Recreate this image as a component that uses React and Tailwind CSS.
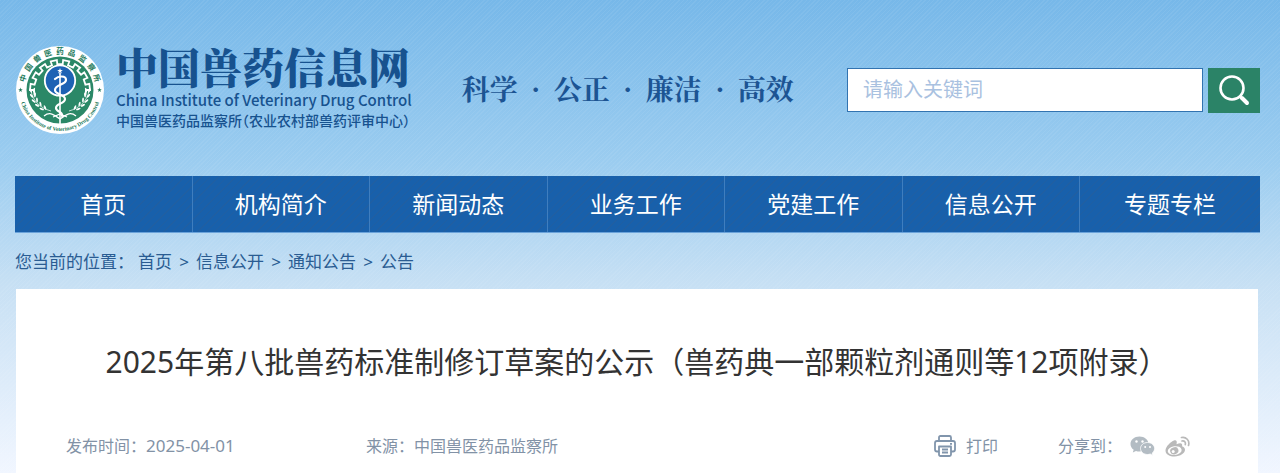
import { useState } from "react";

const navItems = ["首页", "机构简介", "新闻动态", "业务工作", "党建工作", "信息公开", "专题专栏"];
const crumbs = ["首页", "信息公开", "通知公告", "公告"];
const slogan = ["科学", "公正", "廉洁", "高效"];

const point = (r, deg) => {
  const a = (deg * Math.PI) / 180;
  return `${(45 + r * Math.cos(a)).toFixed(2)} ${(45 + r * Math.sin(a)).toFixed(2)}`;
};

// open gear rim, from lower left over the top to lower right
const gearPath = () => {
  const pts = [];
  const step = 204 / 17;
  for (let i = 0; i < 17; i++) {
    const r = i % 2 === 0 ? 26 : 30;
    pts.push(point(r, 168 + i * step), point(r, 168 + (i + 1) * step));
  }
  return "M" + pts.join(" L");
};

const leaves = [
  [17, 46, 60],
  [18, 51, 50],
  [20, 56, 40],
  [23.5, 60, 30],
  [28, 63.5, 20],
];

function Star({ x, y, r }) {
  const pts = Array.from({ length: 10 }, (_, i) => {
    const a = (-90 + i * 36) * (Math.PI / 180);
    const d = i % 2 ? r * 0.4 : r;
    return `${(x + d * Math.cos(a)).toFixed(2)},${(y + d * Math.sin(a)).toFixed(2)}`;
  });
  return <polygon points={pts.join(" ")} />;
}

function Branch() {
  return (
    <g>
      <path d="M16 46C18 56 25 63 36 66" fill="none" stroke="#fff" strokeWidth="0.7" />
      {leaves.map(([x, y, rot]) => (
        <g key={y} fill="#fff">
          <ellipse cx={x - 1} cy={y + 1} rx="2.4" ry="0.9" transform={`rotate(${rot} ${x} ${y})`} />
          <ellipse cx={x + 2} cy={y - 1} rx="2.4" ry="0.9" transform={`rotate(${rot + 45} ${x + 2} ${y - 1})`} />
        </g>
      ))}
    </g>
  );
}

function Emblem() {
  return (
    <svg viewBox="0 0 90 90" className="size-[90px] shrink-0" role="img" aria-label="中国兽医药品监察所">
      <defs>
        <path id="ring-top" d="M9 45A36 36 0 0 1 81 45" />
        <path id="ring-bottom" d="M4 45A41 41 0 0 0 86 45" />
      </defs>
      <circle cx="45" cy="45" r="44" fill="#fff" />
      <circle cx="45" cy="45" r="33.5" fill="#2b8867" />
      <g fill="#22795a" className="font-['Noto_Sans_CJK_SC',sans-serif] font-bold">
        {"中国兽医药品监察所".split("").map((c, i) => (
          <text key={i} fontSize="7.5" textAnchor="middle">
            <textPath href="#ring-top" startOffset={`${10 + i * 10}%`}>{c}</textPath>
          </text>
        ))}
      </g>
      <text fontSize="5.6" textAnchor="middle" fill="#22795a" className="font-['Liberation_Serif',serif] font-bold">
        <textPath href="#ring-bottom" startOffset="50%">China Institute of Veterinary Drug Control</textPath>
      </text>
      <g fill="#22795a">
        <Star x={5.5} y={45} r={2.4} />
        <Star x={84.5} y={45} r={2.4} />
      </g>
      <path d={gearPath()} fill="none" stroke="#fff" strokeWidth="1.8" />
      <circle cx="45" cy="35.5" r="15.2" fill="#1d62b4" stroke="#fff" strokeWidth="1.8" />
      <Branch />
      <g transform="translate(90 0) scale(-1 1)">
        <Branch />
      </g>
      <g fill="#fff">
        <Star x={45} y={26} r={3} />
      </g>
      <path d="M45 28V79" stroke="#fff" strokeWidth="1.6" />
      <path
        d="M40 34C43 31 51 30 51 35C51 40 40 39 40 45C40 50 50 49 50 54C50 59 41 58 41 63C41 67 48 66 47 71"
        fill="none"
        stroke="#fff"
        strokeWidth="2.2"
        strokeLinecap="round"
      />
      <path d="M29 71C35 66 39 70 45 74C51 70 55 66 61 71M38 72L45 69L52 72" fill="none" stroke="#fff" strokeWidth="1.3" />
    </svg>
  );
}

function SearchIcon() {
  return (
    <svg viewBox="0 0 32 32" className="size-8" fill="none" stroke="#fff" strokeWidth="2.6" strokeLinecap="round">
      <circle cx="14" cy="14" r="11.5" />
      <path d="M22 22.5L23.5 24" />
      <path d="M24 24L29 29" strokeWidth="4" />
    </svg>
  );
}

function PrinterIcon() {
  return (
    <svg viewBox="0 0 22 22" className="size-[22px]" fill="none" stroke="#8195ac" strokeWidth="1.8" strokeLinejoin="round">
      <path d="M5 6V2.5Q5 1 6.500 1H15.500Q17 1 17 2.500V6" />
      <path d="M5 16.500H3Q1 16.500 1 14.500V8Q1 6 3 6H19Q21 6 21 8V14.500Q21 16.500 19 16.500H17" />
      <path d="M5 11.500H17V19.500Q17 21 15.500 21H6.500Q5 21 5 19.500Z" />
      <path d="M8 14.500H14M8 17.500H14M16 8.800H18" />
    </svg>
  );
}

function WechatIcon() {
  return (
    <svg viewBox="0 0 25 20" className="h-5 w-[25px]">
      <path d="M9.500 0.500C4.300 0.500 0.500 3.800 0.500 8C0.500 10.400 1.800 12.400 3.700 13.800L2.800 16.500L6 14.900C7.100 15.200 8.200 15.500 9.500 15.500C14.500 15.500 18.500 12.200 18.500 8C18.500 3.800 14.500 0.500 9.500 0.500Z" fill="#b3bcc3" />
      <path d="M17.500 6.500C13.500 6.500 10.500 9.200 10.500 12.500C10.500 15.800 13.500 18.500 17.500 18.500C18.500 18.500 19.400 18.300 20.300 18L22.800 19.500L22.200 17.100C23.700 16 24.600 14.400 24.600 12.500C24.600 9.200 21.500 6.500 17.500 6.500Z" fill="#b3bcc3" stroke="#fff" strokeWidth="0.8" />
      <g fill="#fff">
        <circle cx="6.500" cy="5.500" r="1.200" />
        <circle cx="12.500" cy="5.500" r="1.200" />
        <circle cx="15.200" cy="11" r="1" />
        <circle cx="20" cy="11" r="1" />
      </g>
    </svg>
  );
}

function WeiboIcon() {
  return (
    <svg viewBox="0 0 25 21" className="h-[21px] w-[25px]">
      <path d="M9 4.500C6 5.500 0.500 10.500 0.500 14.500C0.500 18.500 5 20.500 9.500 20.500C15.500 20.500 20 17 20 13.800C20 11.800 18.500 10.700 17 10.300C17.800 8 16.500 6 11.500 8.200C12.300 5.500 11.500 3.800 9 4.500Z" fill="#b9b9b9" />
      <ellipse cx="9.700" cy="14.600" rx="7" ry="4.400" fill="#fff" transform="rotate(-8 9.700 14.600)" />
      <ellipse cx="9.300" cy="14.800" rx="4.200" ry="3.500" fill="#b9b9b9" transform="rotate(-18 9.300 14.800)" />
      <circle cx="8.200" cy="15.600" r="1.500" fill="#fff" />
      <g fill="none" stroke="#b9b9b9" strokeWidth="1.700" strokeLinecap="round">
        <path d="M16.500 1.500C21 0.500 25 4.500 23.500 9.500" />
        <path d="M17 5C19.500 4.500 21 6.300 20.300 8.600" />
      </g>
    </svg>
  );
}

export default function App() {
  const [keyword, setKeyword] = useState("");

  return (
    <div className="min-h-screen bg-[repeating-linear-gradient(135deg,#ffffff0f_0px,#ffffff0f_1px,transparent_1px,transparent_3px),linear-gradient(to_bottom,#77b8e9_0px,#9ccdf0_165px,#c7e0f4_285px,#f1f6ff_473px)] px-[15px] pr-5 font-['Noto_Sans','Noto_Sans_CJK_SC',sans-serif]">
      <header className="flex h-44 items-center pt-1">
        <a href="#" className="flex items-center gap-[11px] text-[#17528f]">
          <Emblem />
          <div className="pb-1 whitespace-nowrap font-['Noto_Sans_CJK_SC',sans-serif]">
            <h1 className="mb-1 font-['Noto_Serif_CJK_SC','Noto_Sans_CJK_SC',serif] text-[42px] leading-10 font-black">中国兽药信息网</h1>
            <p className="text-[15px] leading-5 font-medium">China Institute of Veterinary Drug Control</p>
            <p className="text-sm leading-5 font-medium [font-feature-settings:'halt']">中国兽医药品监察所（农业农村部兽药评审中心）</p>
          </div>
        </a>

        <p className="ml-[50px] flex pb-1 font-['Noto_Serif_CJK_SC','Noto_Sans_CJK_SC',serif] text-[28px] leading-10 font-bold whitespace-nowrap text-[#1c5493]">
          {slogan.map((word, i) => (
            <span key={word} className="flex">
              {i > 0 && <span className="w-9 text-center">·</span>}
              {word}
            </span>
          ))}
        </p>

        <form className="ml-auto flex gap-[5px]" onSubmit={(e) => e.preventDefault()}>
          <input
            type="text"
            aria-label="请输入关键词"
            placeholder="请输入关键词"
            value={keyword}
            onChange={(e) => setKeyword(e.target.value)}
            className="h-11 w-[356px] border border-[#3273b0] bg-white px-[15px] text-xl text-[#17528f] outline-none placeholder:text-[#a9c1e0]"
          />
          <button type="submit" aria-label="搜索" className="flex h-[45px] w-[52px] items-center justify-center bg-[#2b8367]">
            <SearchIcon />
          </button>
        </form>
      </header>

      <nav className="flex border-b border-[#6ba3da] bg-[#1860ab] bg-[repeating-linear-gradient(135deg,#2c5d9460_0px,#2c5d9460_1px,transparent_1px,transparent_6px)]">
        {navItems.map((item) => (
          <a
            key={item}
            href="#"
            className="h-14 flex-1 border-r border-[#3f7ebf] text-center text-[23px] leading-14 text-white last:grow-[1.02] last:border-r-0"
          >
            {item}
          </a>
        ))}
      </nav>

      <div className="flex h-14 items-center pt-0.5 text-[17px] text-[#2a5c92]">
        <span className="mr-1">您当前的位置：</span>
        {crumbs.map((crumb, i) => (
          <span key={crumb} className="flex">
            {i > 0 && <span className="w-6 text-center">&gt;</span>}
            <a href="#">{crumb}</a>
          </span>
        ))}
      </div>

      <main className="mr-0.5 ml-px min-h-[185px] bg-white px-[50px]">
        <h2 className="pt-[49px] text-center text-[30px] leading-12 text-[#333]">
          2025年第八批兽药标准制修订草案的公示（兽药典一部颗粒剂通则等12项附录）
        </h2>
        <div className="flex items-center pt-12 text-base leading-6 text-[#8292a6]">
          <p className="w-[300px]">
            发布时间：<time className="text-[17px]">2025-04-01</time>
          </p>
          <p>来源：中国兽医药品监察所</p>
          <button type="button" className="ml-auto flex items-center gap-2.5">
            <PrinterIcon />
            打印
          </button>
          <div className="mr-[18px] ml-[60px] flex items-center">
            <span className="mr-2">分享到：</span>
            <a href="#" aria-label="微信" className="mr-2.5">
              <WechatIcon />
            </a>
            <a href="#" aria-label="微博">
              <WeiboIcon />
            </a>
          </div>
        </div>
      </main>
    </div>
  );
}
